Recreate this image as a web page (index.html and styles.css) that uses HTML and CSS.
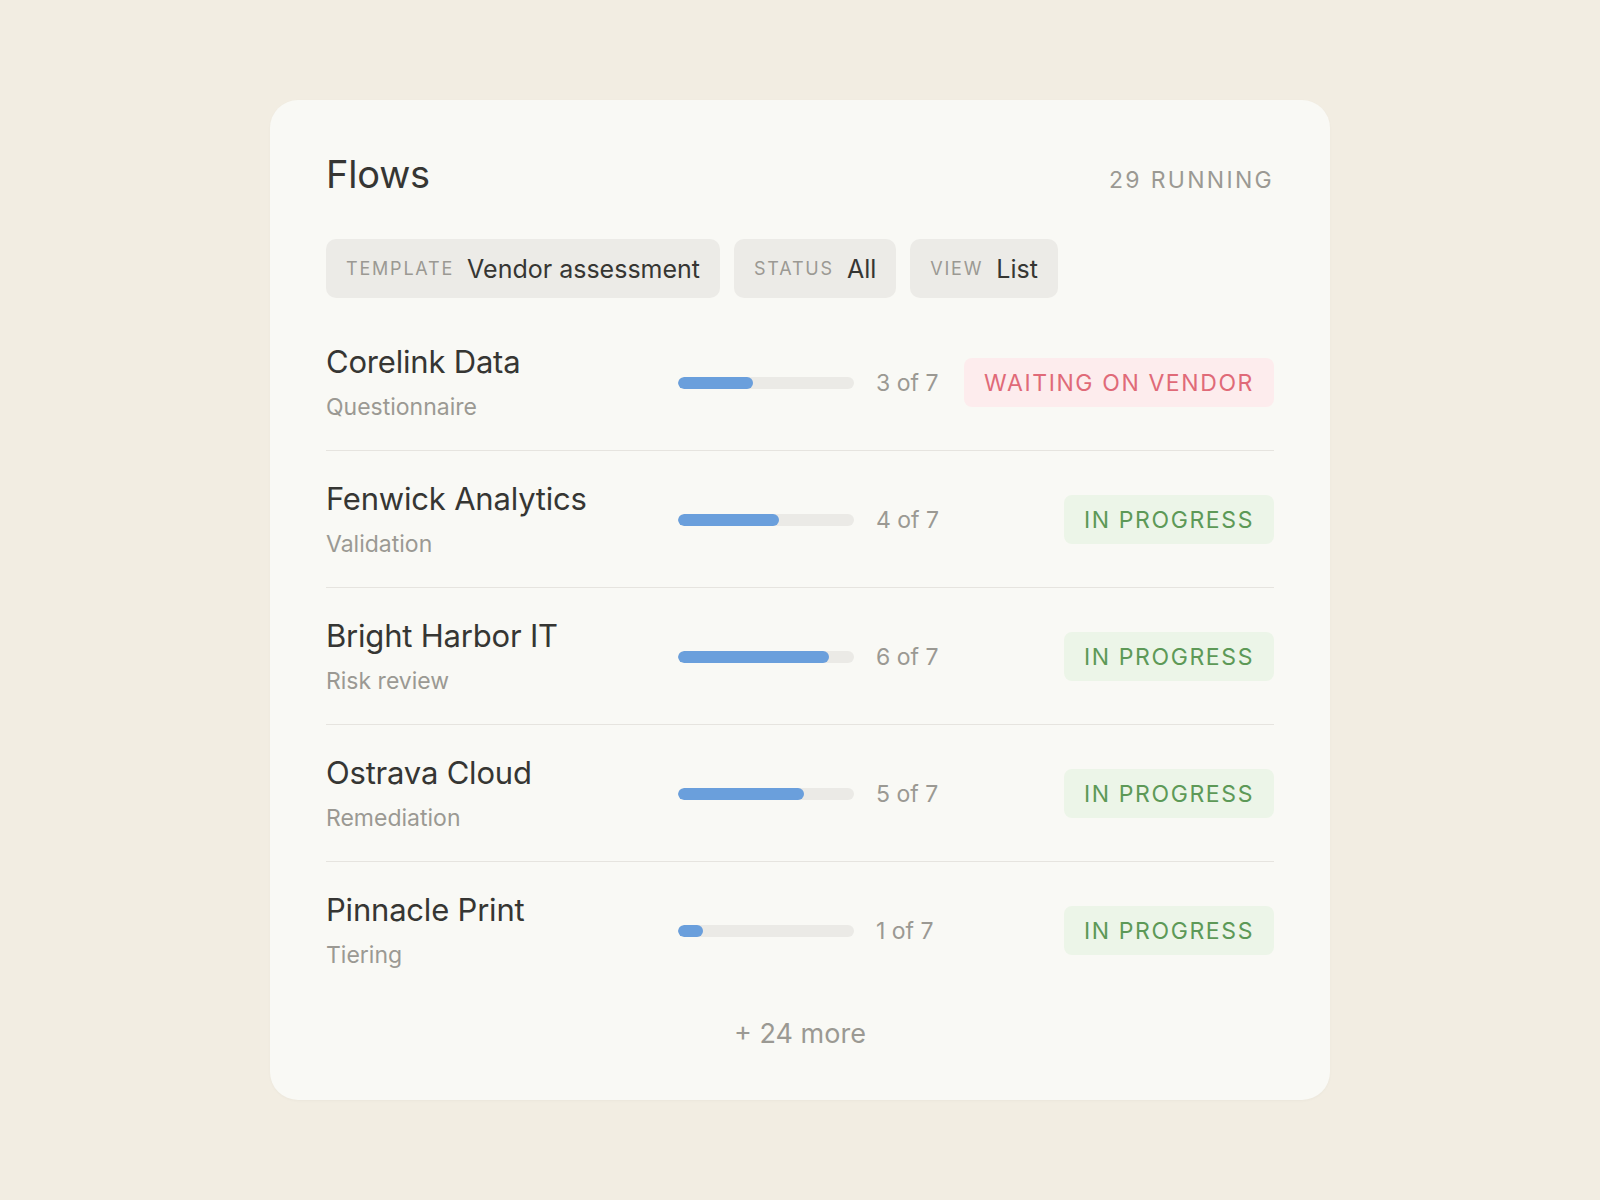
FILE: index.html
```html
<!DOCTYPE html>
<html lang="en">
<head>
  <meta charset="UTF-8" />
  <title>Flows</title>
  <link rel="stylesheet" href="styles.css">
</head>
<body>

  <div class="card">
    <!-- Header -->
    <div class="card-head">
      <h1>Flows</h1>
      <span class="running">29 Running</span>
    </div>

    <!-- Filters -->
    <div class="filters">
      <div class="pill"><span class="pill-label">Template</span><span class="pill-value">Vendor assessment</span></div>
      <div class="pill"><span class="pill-label">Status</span><span class="pill-value">All</span></div>
      <div class="pill"><span class="pill-label">View</span><span class="pill-value">List</span></div>
    </div>

    <!-- Flow rows -->
    <div class="rows">
      <div class="row">
        <div class="info">
          <div class="name">Corelink Data</div>
          <div class="stage">Questionnaire</div>
        </div>
        <div class="bar"><div class="fill" style="width: 42.857%"></div></div>
        <div class="count">3 of 7</div>
        <div class="status"><span class="badge waiting">Waiting on vendor</span></div>
      </div>

      <div class="row">
        <div class="info">
          <div class="name">Fenwick Analytics</div>
          <div class="stage">Validation</div>
        </div>
        <div class="bar"><div class="fill" style="width: 57.143%"></div></div>
        <div class="count">4 of 7</div>
        <div class="status"><span class="badge progress">In progress</span></div>
      </div>

      <div class="row">
        <div class="info">
          <div class="name">Bright Harbor IT</div>
          <div class="stage">Risk review</div>
        </div>
        <div class="bar"><div class="fill" style="width: 85.714%"></div></div>
        <div class="count">6 of 7</div>
        <div class="status"><span class="badge progress">In progress</span></div>
      </div>

      <div class="row">
        <div class="info">
          <div class="name">Ostrava Cloud</div>
          <div class="stage">Remediation</div>
        </div>
        <div class="bar"><div class="fill" style="width: 71.429%"></div></div>
        <div class="count">5 of 7</div>
        <div class="status"><span class="badge progress">In progress</span></div>
      </div>

      <div class="row">
        <div class="info">
          <div class="name">Pinnacle Print</div>
          <div class="stage">Tiering</div>
        </div>
        <div class="bar"><div class="fill" style="width: 14.286%"></div></div>
        <div class="count">1 of 7</div>
        <div class="status"><span class="badge progress">In progress</span></div>
      </div>
    </div>

    <div class="more">+ 24 more</div>
  </div>

</body>
</html>
```

FILE: styles.css
```css
html, body {
  margin: 0;
  padding: 0;
  height: 100%;
  font-family: Inter, "Noto Sans", sans-serif;
  background-color: #f2ede2;
  color: #363633;
}

body {
  display: flex;
  align-items: center;
  justify-content: center;
}

/* Card */
.card {
  width: 1060px;
  height: 1000px;
  box-sizing: border-box;
  padding: 50px 56px 48px;
  background: #f9f9f5;
  border-radius: 28px;
  box-shadow: 0 1px 3px rgba(0, 0, 0, 0.03);
}

.card-head {
  display: flex;
  justify-content: space-between;
  align-items: baseline;
}
.card-head h1 {
  margin: 0;
  font-size: 38px;
  line-height: 48px;
  font-weight: 400;
  letter-spacing: -0.2px;
}
.running {
  font-size: 23px;
  letter-spacing: 0.1em;
  text-transform: uppercase;
  color: #9b9993;
}

/* Filter pills */
.filters {
  display: flex;
  gap: 14px;
  margin-top: 41px;
  margin-bottom: 16px;
}
.pill {
  display: flex;
  align-items: center;
  gap: 13px;
  height: 59px;
  padding: 0 20px;
  background: #ecebe7;
  border-radius: 10px;
}
.pill-label {
  font-size: 18px;
  letter-spacing: 0.1em;
  text-transform: uppercase;
  color: #9b9993;
}
.pill-value {
  font-size: 25px;
  color: #363633;
}

/* Rows */
.row {
  display: flex;
  align-items: center;
  gap: 22px;
  padding: 28px 0 27px;
  border-bottom: 1px solid #e6e4df;
}
.row:last-child {
  border-bottom: none;
}
.info {
  flex: 1;
}
.name {
  font-size: 31px;
  line-height: 40px;
  letter-spacing: -0.2px;
}
.stage {
  margin-top: 9px;
  font-size: 23px;
  line-height: 32px;
  color: #9b9993;
}
.bar {
  width: 176px;
  height: 12px;
  border-radius: 6px;
  background: #ebeae6;
  overflow: hidden;
}
.fill {
  height: 100%;
  background: #6a9fdc;
  border-radius: 6px;
}
.count {
  width: 66px;
  font-size: 23px;
  white-space: nowrap;
  color: #9b9993;
}
.status {
  width: 310px;
  display: flex;
  justify-content: flex-end;
}
.badge {
  display: inline-flex;
  align-items: center;
  height: 49px;
  padding: 0 20px;
  border-radius: 8px;
  font-size: 23px;
  letter-spacing: 1.6px;
  text-transform: uppercase;
  white-space: nowrap;
}
.badge.waiting {
  background: #fdeced;
  color: #e06a78;
}
.badge.progress {
  background: #ecf5e8;
  color: #5d9957;
}

.more {
  margin-top: 18px;
  text-align: center;
  font-size: 27px;
  line-height: 36px;
  color: #9b9993;
}
```
